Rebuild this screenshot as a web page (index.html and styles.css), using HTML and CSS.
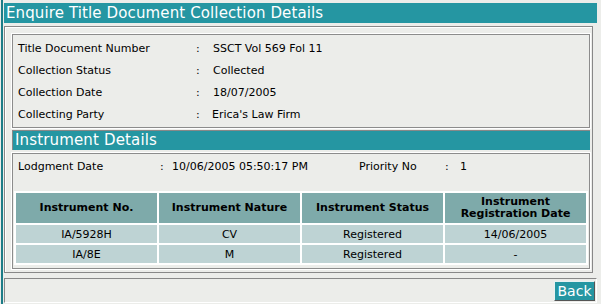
FILE: index.html
```html
<!DOCTYPE html>
<html lang="en">
<head>
    <meta charset="UTF-8">
    <title>Enquire Title Document Collection Details</title>
    <link rel="stylesheet" href="styles.css">
</head>
<body>
    <div class="page">
        <div class="title-bar">Enquire Title Document Collection Details</div>

        <div class="frame">
            <!-- datos del documento -->
            <div class="box details">
                <div class="row">
                    <span class="label">Title Document Number</span>
                    <span class="colon">:</span>
                    <span class="value">SSCT Vol 569 Fol 11</span>
                </div>
                <div class="row">
                    <span class="label">Collection Status</span>
                    <span class="colon">:</span>
                    <span class="value">Collected</span>
                </div>
                <div class="row">
                    <span class="label">Collection Date</span>
                    <span class="colon">:</span>
                    <span class="value">18/07/2005</span>
                </div>
                <div class="row">
                    <span class="label">Collecting Party</span>
                    <span class="colon">:</span>
                    <span class="value party">Erica's Law Firm</span>
                </div>
            </div>

            <div class="section-bar">Instrument Details</div>

            <div class="box instruments">
                <div class="lodgment">
                    <span class="l-label">Lodgment Date</span>
                    <span class="l-colon">:</span>
                    <span class="l-value">10/06/2005 05:50:17 PM</span>
                    <span class="p-label">Priority No</span>
                    <span class="p-colon">:</span>
                    <span class="p-value">1</span>
                </div>

                <table class="grid">
                    <tr>
                        <th>Instrument No.</th>
                        <th>Instrument Nature</th>
                        <th>Instrument Status</th>
                        <th>Instrument<br>Registration Date</th>
                    </tr>
                    <tr>
                        <td>IA/5928H</td>
                        <td>CV</td>
                        <td>Registered</td>
                        <td>14/06/2005</td>
                    </tr>
                    <tr>
                        <td>IA/8E</td>
                        <td>M</td>
                        <td>Registered</td>
                        <td>-</td>
                    </tr>
                </table>
            </div>
        </div>

        <div class="footer">
            <button class="back-button">Back</button>
        </div>
    </div>
</body>
</html>
```

FILE: styles.css
```css
body {
    margin: 0;
    padding: 0;
    background-color: #ecedea;
    font-family: 'DejaVu Sans', Verdana, sans-serif;
    font-size: 11px;
    color: #000;
    height: 304px;
    overflow: hidden;
}

.page {
    margin-left: 1px;
    border-left: 2px solid #1d7d88;
    padding: 3px 4px 0 1px;
    height: 304px;
    box-sizing: border-box;
}

.title-bar {
    background-color: #2596a2;
    color: #fff;
    font-size: 15px;
    letter-spacing: 0.12px;
    height: 20px;
    line-height: 20px;
    padding-left: 2px;
}

/* marco exterior */
.frame {
    margin: 3px 4px 0 0;
    border: 1px solid #888;
    box-shadow: inset 1px 1px 0 #fff;
    padding: 7px 2px 3px 7px;
}

.box {
    border: 1px solid #8c8c8c;
    box-shadow: 0 0 0 1px #fff;
}

.details {
    padding: 3px 0 1px 5px;
}

.row {
    display: flex;
    height: 22px;
    line-height: 22px;
}

.label {
    width: 178px;
}

.colon {
    width: 17px;
}

.party {
    margin-left: -1px;
}

.section-bar {
    margin-top: 2px;
    border-top: 1px solid #888;
    border-left: 1px solid #888;
    background-color: #2596a2;
    color: #fff;
    font-size: 15px;
    letter-spacing: 0.15px;
    height: 19px;
    line-height: 19px;
    padding-left: 2px;
}

.instruments {
    margin-top: 3px;
    padding: 2px 0 3px 0;
}

.lodgment {
    display: flex;
    height: 22px;
    line-height: 22px;
    padding-left: 5px;
    margin-bottom: 13px;
}

.l-label { width: 142px; }
.l-colon { width: 12px; }
.l-value { width: 187px; }
.p-label { width: 86px; }
.p-colon { width: 15px; }

.grid {
    border-collapse: separate;
    border-spacing: 2px;
    margin-left: 1px;
    width: 574px;
    table-layout: fixed;
    background-color: #fff;
}

.grid th {
    background-color: #7eaaaa;
    font-weight: bold;
    height: 30px;
    padding: 0;
    line-height: 12px;
    text-align: center;
}

.grid td {
    background-color: #bed3d4;
    height: 18px;
    padding: 0;
    text-align: center;
}

.footer {
    margin-top: 5px;
    border: 1px solid #888;
    border-right-color: #fff;
    border-bottom-color: #fff;
    height: 23px;
    display: flex;
    justify-content: flex-end;
    align-items: center;
    padding-right: 1px;
}

.back-button {
    background-color: #2596a2;
    color: #fff;
    font-family: 'DejaVu Sans', Verdana, sans-serif;
    font-size: 14px;
    width: 41px;
    height: 20px;
    padding: 0;
    border: 1px solid;
    border-color: #e6f2f3 #555 #555 #e6f2f3;
    cursor: pointer;
}
```
